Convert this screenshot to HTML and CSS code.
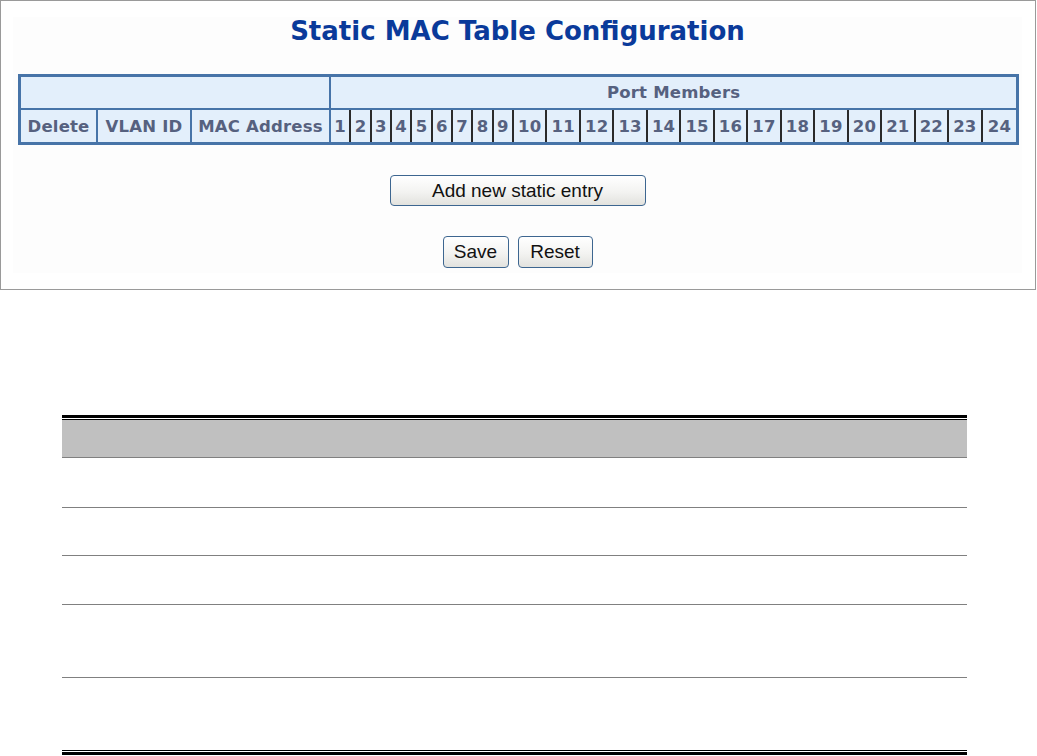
FILE: index.html
```html
<!DOCTYPE html>
<html lang="en">
<head>
    <meta charset="UTF-8">
    <meta name="viewport" content="width=device-width, initial-scale=1.0">
    <title>Static MAC Table Configuration</title>
    <link rel="stylesheet" href="styles.css">
</head>
<body>

    <div class="panel">
        <div class="panel-inner">
            <h1 class="title">Static MAC Table Configuration</h1>

            <table class="mac-table">
                <colgroup>
                    <col class="c-delete">
                    <col class="c-vlan">
                    <col class="c-mac">
                    <col class="c-p1"><col class="c-p1"><col class="c-p1"><col class="c-p1"><col class="c-p1">
                    <col class="c-p1"><col class="c-p1"><col class="c-p1"><col class="c-p1">
                    <col class="c-p2"><col class="c-p2"><col class="c-p2"><col class="c-p2"><col class="c-p2">
                    <col class="c-p2"><col class="c-p2"><col class="c-p2"><col class="c-p2"><col class="c-p2">
                    <col class="c-p2"><col class="c-p2"><col class="c-p2"><col class="c-p2"><col class="c-p2">
                </colgroup>
                <tr class="row-top">
                    <th colspan="3" class="blank"></th>
                    <th colspan="24">Port Members</th>
                </tr>
                <tr class="row-cols">
                    <th class="lead">Delete</th>
                    <th class="lead">VLAN ID</th>
                    <th class="lead">MAC Address</th>
                    <th class="port">1</th>
                    <th class="port">2</th>
                    <th class="port">3</th>
                    <th class="port">4</th>
                    <th class="port">5</th>
                    <th class="port">6</th>
                    <th class="port">7</th>
                    <th class="port">8</th>
                    <th class="port">9</th>
                    <th class="port">10</th>
                    <th class="port">11</th>
                    <th class="port">12</th>
                    <th class="port">13</th>
                    <th class="port">14</th>
                    <th class="port">15</th>
                    <th class="port">16</th>
                    <th class="port">17</th>
                    <th class="port">18</th>
                    <th class="port">19</th>
                    <th class="port">20</th>
                    <th class="port">21</th>
                    <th class="port">22</th>
                    <th class="port">23</th>
                    <th class="port last">24</th>
                </tr>
            </table>

            <div class="add-row">
                <button class="btn btn-add">Add new static entry</button>
            </div>
            <div class="save-row">
                <button class="btn btn-save">Save</button>
                <button class="btn btn-reset">Reset</button>
            </div>
        </div>
    </div>

    <div class="ref">
        <div class="ref-table">
            <div class="ref-head"></div>
            <div class="ref-row r1"></div>
            <div class="ref-row r2"></div>
            <div class="ref-row r3"></div>
            <div class="ref-row r4"></div>
            <div class="ref-row r5"></div>
        </div>
    </div>

</body>
</html>
```

FILE: styles.css
```css
* {
    box-sizing: border-box;
    margin: 0;
    padding: 0;
}

body {
    background-color: #ffffff;
    font-family: "DejaVu Sans", Verdana, sans-serif;
}

/* top panel */
.panel {
    width: 1036px;
    height: 290px;
    border: 1px solid #9a9a9a;
    padding: 16px 13px 0 12px;
}

.panel-inner {
    background-color: #fdfdfd;
    height: 256px;
}

.title {
    text-align: center;
    font-size: 26px;
    line-height: 28px;
    font-weight: bold;
    color: #0a3a9a;
}

.mac-table {
    margin: 29px 0 0 5px;
    width: 1001px;
    table-layout: fixed;
    border-collapse: separate;
    border-spacing: 0;
    border: 3px solid #4774a8;
    background-color: #e3effb;
}

.c-delete { width: 77px; }
.c-vlan { width: 94px; }
.c-mac { width: 139px; }
.c-p1 { width: 20.33px; }
.c-p2 { width: 33.47px; }

.mac-table th {
    padding: 0;
    text-align: center;
    font-size: 16.5px;
    font-weight: bold;
    letter-spacing: 0.2px;
    color: #56617f;
    white-space: nowrap;
    overflow: hidden;
}

.row-top th {
    height: 33px;
    border-bottom: 2px solid #4774a8;
}

.row-top th.blank {
    border-right: 2px solid #4774a8;
}

.row-cols th {
    height: 32px;
}

.row-cols th.lead {
    border-right: 2px solid #4774a8;
}

.row-cols th.port {
    border-right: 2px solid #2a2a2a;
}

.row-cols th.last {
    border-right: none;
}

/* buttons */
.add-row {
    display: flex;
    justify-content: center;
    margin-top: 30px;
}

.save-row {
    display: flex;
    justify-content: center;
    gap: 9px;
    margin-top: 30px;
}

.btn {
    font-family: "Liberation Sans", Arial, sans-serif;
    font-size: 19px;
    color: #111;
    border: 1px solid #3d6690;
    border-radius: 4px;
    background: linear-gradient(#ffffff, #f3f3f1 55%, #e2e2de);
    cursor: pointer;
}

.btn-add {
    width: 256px;
    height: 31px;
}

.btn-save {
    width: 66px;
    height: 32px;
}

.btn-reset {
    width: 75px;
    height: 32px;
}

/* reference table below */
.ref {
    width: 905px;
    margin: 125px 0 0 62px;
    border-top: 3px solid #000;
    border-bottom: 3px solid #000;
    padding: 1px 0;
}

.ref-table {
    border-top: 1px solid #000;
    border-bottom: 1px solid #000;
}

.ref-head {
    height: 38px;
    background-color: #c0c0c0;
    border-bottom: 1px solid #808080;
}

.ref-row {
    border-bottom: 1px solid #808080;
}

.ref-row.r1 { height: 50px; }
.ref-row.r2 { height: 48px; }
.ref-row.r3 { height: 49px; }
.ref-row.r4 { height: 73px; }
.ref-row.r5 { height: 72px; border-bottom: none; }
```
